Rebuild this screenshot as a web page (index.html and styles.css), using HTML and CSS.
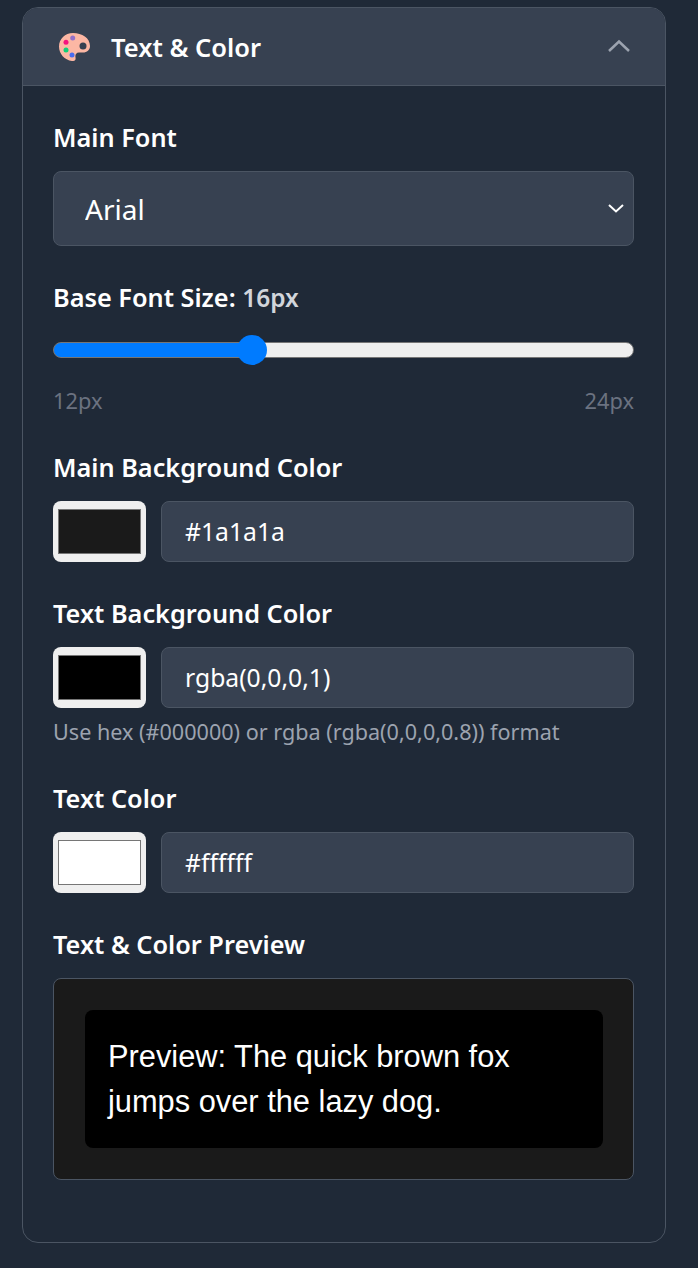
FILE: index.html
```html
<!DOCTYPE html>
<html lang="en">
<head>
    <meta charset="UTF-8">
    <meta name="viewport" content="width=device-width, initial-scale=1.0">
    <title>Text &amp; Color</title>
    <link rel="stylesheet" href="styles.css">
</head>
<body>
    <section class="panel">
        <header class="panel-header">
            <div class="panel-title">
                <svg class="palette-icon" width="31" height="28" viewBox="0 0 31 28">
                    <path fill="#fcb7a4" d="M14 0C6 0 0 6 0 13.500C0 21 5.500 27 13 28C16 28.300 17 26.500 16.500 24.500C16 22 17 19.500 20 19.500L24 19.500C28 19.500 31 17 31 13C31 5 23 0 14 0z"/>
                    <circle cx="24" cy="13" r="3.500" fill="#374151"/>
                    <circle cx="13.700" cy="5" r="2.500" fill="#9370c8"/>
                    <circle cx="7" cy="9.300" r="2.500" fill="#f5137f"/>
                    <circle cx="7" cy="17" r="2.500" fill="#10cf78"/>
                    <circle cx="13" cy="22" r="2.500" fill="#4a6cf0"/>
                </svg>
                <span>Text &amp; Color</span>
            </div>
            <svg class="chevron-up" width="24" height="14" viewBox="0 0 24 14">
                <path d="M2 12L12 2.500L22 12" fill="none" stroke="#9ca3af" stroke-width="2.500"/>
            </svg>
        </header>

        <div class="panel-body">
            <div class="field">
                <label class="field-label">Main Font</label>
                <div class="select-wrap">
                    <select class="font-select">
                        <option>Arial</option>
                    </select>
                    <svg class="select-arrow" width="18" height="12" viewBox="0 0 18 12">
                        <path d="M2 3l7 6.500L16 3" fill="none" stroke="#fff" stroke-width="2"/>
                    </svg>
                </div>
            </div>

            <div class="field field-size">
                <label class="field-label">Base Font Size: <span class="size-value">16px</span></label>
                <input class="size-range" type="range" min="12" max="24" value="16">
                <div class="range-ends">
                    <span>12px</span>
                    <span>24px</span>
                </div>
            </div>

            <div class="field">
                <label class="field-label">Main Background Color</label>
                <div class="color-row">
                    <input class="color-swatch" type="color" value="#1a1a1a">
                    <input class="color-text" type="text" value="#1a1a1a">
                </div>
            </div>

            <div class="field">
                <label class="field-label">Text Background Color</label>
                <div class="color-row">
                    <input class="color-swatch" type="color" value="#000000">
                    <input class="color-text" type="text" value="rgba(0,0,0,1)">
                </div>
                <p class="hint">Use hex (#000000) or rgba (rgba(0,0,0,0.8)) format</p>
            </div>

            <div class="field">
                <label class="field-label">Text Color</label>
                <div class="color-row">
                    <input class="color-swatch" type="color" value="#ffffff">
                    <input class="color-text" type="text" value="#ffffff">
                </div>
            </div>

            <div class="field">
                <label class="field-label">Text &amp; Color Preview</label>
                <div class="preview-box">
                    <p class="preview-text">Preview: The quick brown fox jumps over the lazy dog.</p>
                </div>
            </div>
        </div>
    </section>
</body>
</html>
```

FILE: styles.css
```css
* {
    box-sizing: border-box;
}
body {
    margin: 0;
    padding: 7px 32px 25px 22px;
    background-color: #1f2937;
    font-family: "Noto Sans", "Open Sans", sans-serif;
    color: #fff;
}
.panel {
    border: 1px solid #4b5563;
    border-radius: 16px;
    overflow: hidden;
    background-color: #1f2937;
}
.panel-header {
    display: flex;
    justify-content: space-between;
    align-items: center;
    height: 78px;
    padding: 0 34px 0 36px;
    background-color: #374151;
    border-bottom: 1px solid #4b5563;
}
.panel-title {
    display: flex;
    align-items: center;
    gap: 21px;
    font-size: 25.500px;
    font-weight: 600;
}
.chevron-up {
    margin-bottom: 2px;
}
.panel-body {
    padding: 34px 31px 62px 30px;
}
.field {
    margin-bottom: 34px;
}
.field:last-child {
    margin-bottom: 0;
}
.field-label {
    display: block;
    margin-bottom: 17px;
    font-size: 25.300px;
    line-height: 34px;
    font-weight: 600;
}
.select-wrap {
    position: relative;
}
.font-select {
    display: block;
    width: 100%;
    height: 75px;
    padding: 0 31px;
    appearance: none;
    background-color: #374151;
    border: 1px solid #4b5563;
    border-radius: 8px;
    color: #fff;
    font-family: inherit;
    font-size: 28px;
}
.select-arrow {
    position: absolute;
    top: 31px;
    right: 9px;
}
.size-value {
    color: #d1d5db;
    font-size: 24.500px;
}
.field-size .field-label {
    margin-bottom: 19px;
}
.size-range {
    display: block;
    width: 100%;
    height: 32px;
    margin: 0;
    appearance: none;
    background: transparent;
}
.size-range::-webkit-slider-runnable-track {
    height: 16px;
    border-radius: 8px;
    border: 1px solid #767676;
    background: linear-gradient(to right, #007bff 0, #007bff 34%, #efefef 34%);
}
.size-range::-webkit-slider-thumb {
    appearance: none;
    width: 30px;
    height: 30px;
    margin-top: -8px;
    border-radius: 50%;
    background-color: #007bff;
}
.range-ends {
    display: flex;
    justify-content: space-between;
    margin-top: 20px;
    font-size: 21.800px;
    line-height: 30px;
    color: #6b7280;
}
.color-row {
    display: flex;
    gap: 15px;
}
.color-swatch {
    width: 93px;
    height: 61px;
    padding: 8px 5px;
    flex-shrink: 0;
    border: none;
    border-radius: 8px;
    background-color: #efefef;
}
.color-swatch::-webkit-color-swatch-wrapper {
    padding: 0;
}
.color-swatch::-webkit-color-swatch {
    border: 1px solid #767676;
}
.color-text {
    flex: 1;
    min-width: 0;
    height: 61px;
    padding: 0 23px;
    background-color: #374151;
    border: 1px solid #4b5563;
    border-radius: 8px;
    color: #fff;
    font-family: inherit;
    font-size: 24.700px;
}
.hint {
    margin: 9px 0 0;
    font-size: 21.600px;
    line-height: 30px;
    color: #9ca3af;
}
.preview-box {
    padding: 31px 30px 31px 31px;
    background-color: #1a1a1a;
    border: 1px solid #4b5563;
    border-radius: 8px;
}
.preview-text {
    margin: 0;
    padding: 24px 23px;
    background-color: #000;
    border-radius: 8px;
    font-family: "Liberation Sans", Arial, sans-serif;
    font-size: 30.800px;
    line-height: 45px;
    color: #fff;
}
```
